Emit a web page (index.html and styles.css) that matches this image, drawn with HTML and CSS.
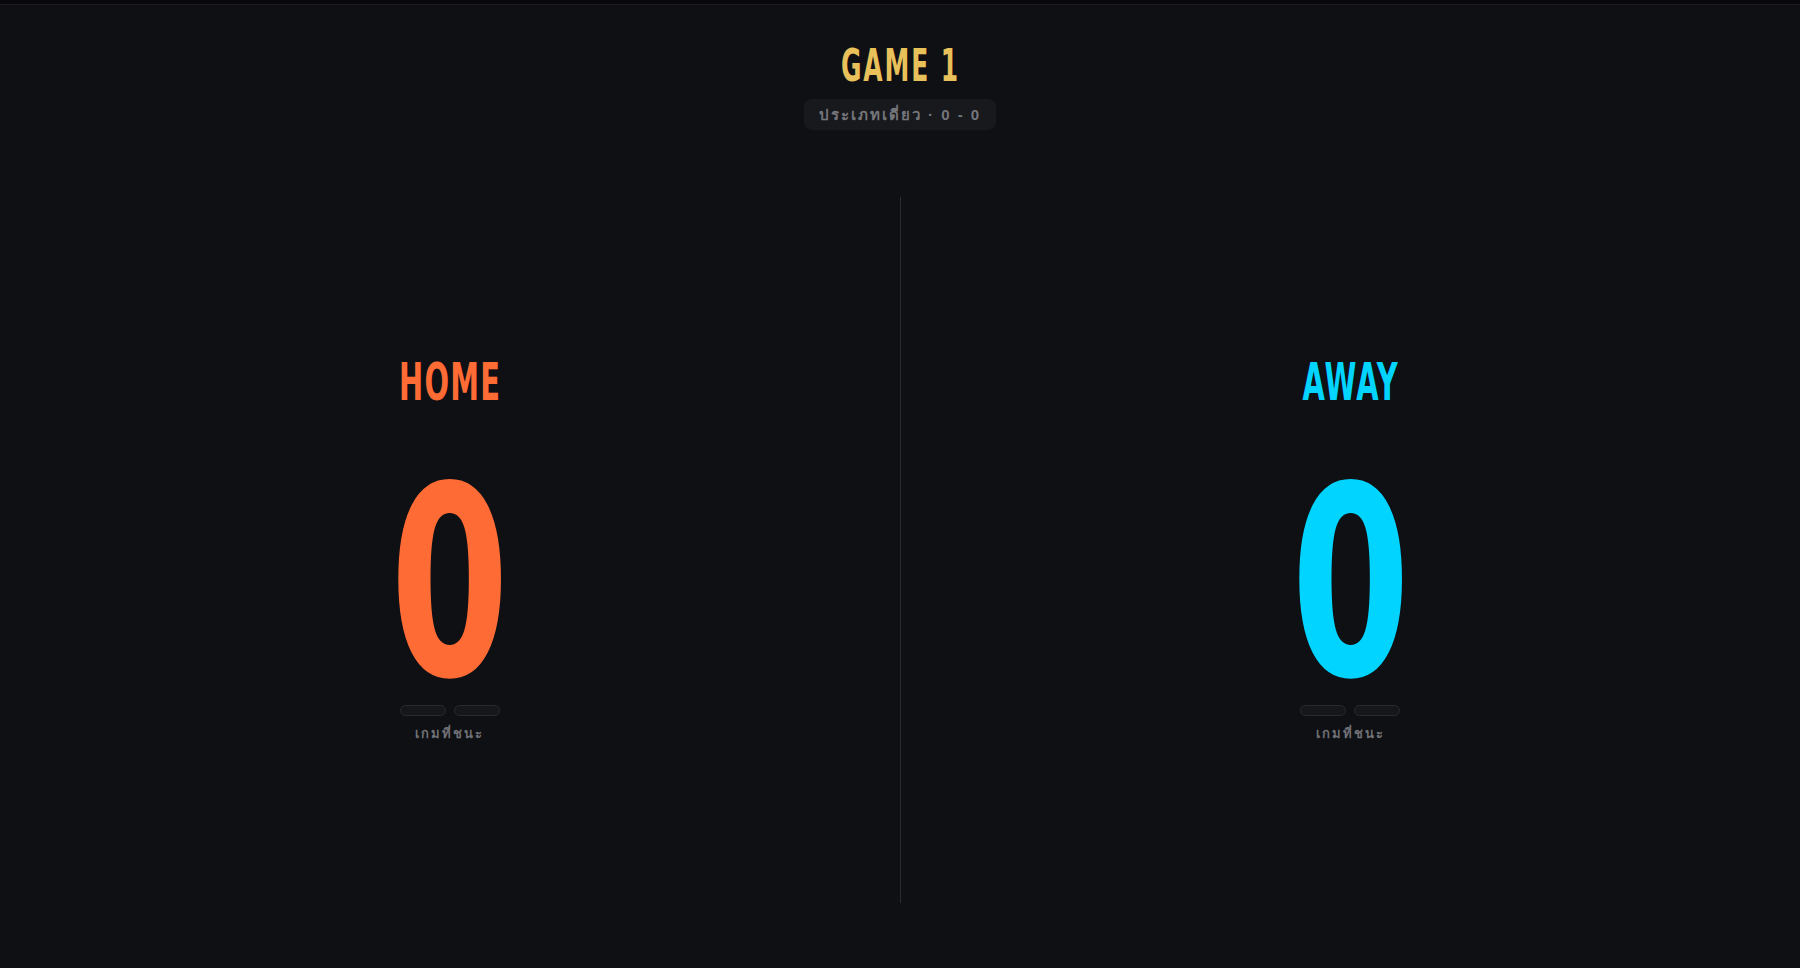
FILE: index.html
```html
<!DOCTYPE html>
<html lang="th">
<head>
    <meta charset="UTF-8">
    <meta name="viewport" content="width=device-width, initial-scale=1.0">
    <title>Scoreboard</title>
    <link rel="stylesheet" href="styles.css">
</head>
<body>
    <div class="topbar"></div>

    <div class="header">
        <div class="game-title"><span>GAME 1</span></div>
        <div class="game-info">ประเภทเดี่ยว · 0 - 0</div>
    </div>

    <div class="board">
        <div class="side home">
            <div class="team-name"><span>HOME</span></div>
            <div class="score"><span>0</span></div>
            <div class="games">
                <div class="game-pip"></div>
                <div class="game-pip"></div>
            </div>
            <div class="games-label">เกมที่ชนะ</div>
        </div>

        <div class="divider"></div>

        <div class="side away">
            <div class="team-name"><span>AWAY</span></div>
            <div class="score"><span>0</span></div>
            <div class="games">
                <div class="game-pip"></div>
                <div class="game-pip"></div>
            </div>
            <div class="games-label">เกมที่ชนะ</div>
        </div>
    </div>
</body>
</html>
```

FILE: styles.css
```css
body {
    margin: 0;
    background: #0f1014;
    font-family: 'DejaVu Sans Condensed', 'Liberation Sans', sans-serif;
    color: #e6e6e6;
    height: 100vh;
    overflow: hidden;
}

.topbar {
    height: 4px;
    background: #08080c;
    border-bottom: 1px solid #1b1b21;
}

/* game heading + match type pill */
.header {
    display: flex;
    flex-direction: column;
    align-items: center;
    padding-top: 39px;
}

.game-title {
    font-size: 44px;
    line-height: 1;
    font-weight: bold;
    color: #e8c15b;
    letter-spacing: 3px;
}

/* squeeze the wide sans into a tall scoreboard face */
.game-title span,
.team-name span {
    display: inline-block;
    transform: scaleX(0.63);
}

.score span {
    display: inline-block;
    transform: scaleX(0.72);
}

.game-info {
    margin-top: 11px;
    height: 31px;
    line-height: 31px;
    padding: 0 15px;
    border-radius: 8px;
    background: #18191d;
    color: #75767b;
    font-family: 'Liberation Sans', 'Noto Sans', sans-serif;
    font-size: 15px;
    font-weight: bold;
    letter-spacing: 2px;
}

/* two halves with the line between */
.board {
    display: grid;
    grid-template-columns: 1fr 1px 1fr;
    height: 706px;
    margin-top: 67px;
}

.divider {
    background: #2b2c31;
}

.side {
    display: flex;
    flex-direction: column;
    align-items: center;
    justify-content: center;
}

.team-name {
    font-size: 51px;
    line-height: 1;
    font-weight: bold;
    letter-spacing: 2px;
}

.score {
    margin-top: 70px;
    font-size: 264px;
    line-height: 0.8;
    font-weight: bold;
}

.home .team-name,
.home .score { color: #ff6b35; }

.away .team-name,
.away .score { color: #00d4ff; }

.games {
    display: flex;
    gap: 8px;
    margin-top: 16px;
}

.game-pip {
    width: 44px;
    height: 9px;
    border: 1px solid #2a2b30;
    border-radius: 6px;
    background: #16171b;
}

.games-label {
    margin-top: 9px;
    font-family: 'Liberation Sans', 'Noto Sans', sans-serif;
    font-size: 13px;
    line-height: 18px;
    font-weight: bold;
    letter-spacing: 2px;
    color: #6f7075;
}
```
